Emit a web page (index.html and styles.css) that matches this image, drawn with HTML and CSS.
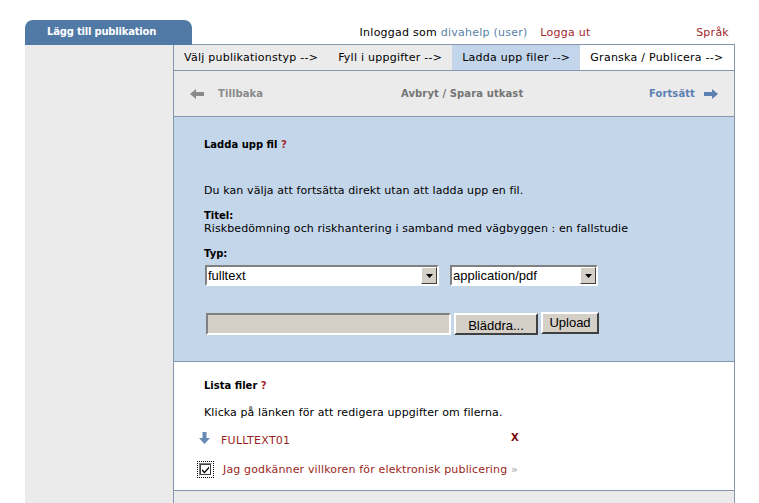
FILE: index.html
```html
<!DOCTYPE html>
<html lang="sv">
<head>
<meta charset="utf-8">
<title>Lägg till publikation</title>
<link rel="stylesheet" href="styles.css">
</head>
<body>
<div class="page">
  <div class="header">
    <div class="tab">Lägg till publikation</div>
    <div class="userbar">
      <div class="login">Inloggad som <span class="user">divahelp (user)</span> <span class="logout">Logga ut</span></div>
      <div class="lang">Språk</div>
    </div>
  </div>
  <div class="body">
    <div class="sidebar"></div>
    <div class="main">
      <div class="steps">
        <div class="step">Välj publikationstyp --&gt;</div>
        <div class="step">Fyll i uppgifter --&gt;</div>
        <div class="step active">Ladda upp filer --&gt;</div>
        <div class="step rest">Granska / Publicera --&gt;</div>
      </div>
      <div class="nav">
        <div class="back">
          <svg class="arrow" width="14" height="10" viewBox="0 0 14 10"><path d="M0 5 L6 0 L6 3 L14 3 L14 7 L6 7 L6 10 Z" fill="#8a8a8a"/></svg>
          <span>Tillbaka</span>
        </div>
        <div class="cancel">Avbryt / Spara utkast</div>
        <div class="next">
          <span>Fortsätt</span>
          <svg class="arrow" width="14" height="10" viewBox="0 0 14 10"><path d="M14 5 L8 0 L8 3 L0 3 L0 7 L8 7 L8 10 Z" fill="#5b80b2"/></svg>
        </div>
      </div>
      <div class="upload">
        <div class="heading">Ladda upp fil <span class="help">?</span></div>
        <p class="info">Du kan välja att fortsätta direkt utan att ladda upp en fil.</p>
        <div class="label">Titel:</div>
        <div class="title">Riskbedömning och riskhantering i samband med vägbyggen : en fallstudie</div>
        <div class="label typ">Typ:</div>
        <div class="selects">
          <div class="select wide"><span class="val">fulltext</span><span class="drop"><svg width="7" height="4" viewBox="0 0 7 4"><path d="M0 0 H7 L3.5 4 Z" fill="#000"/></svg></span></div>
          <div class="select narrow"><span class="val">application/pdf</span><span class="drop"><svg width="7" height="4" viewBox="0 0 7 4"><path d="M0 0 H7 L3.5 4 Z" fill="#000"/></svg></span></div>
        </div>
        <div class="filerow">
          <div class="filefield"></div>
          <div class="btn browse">Bläddra...</div>
          <div class="btn up">Upload</div>
        </div>
      </div>
      <div class="files">
        <div class="heading">Lista filer <span class="help">?</span></div>
        <p class="info">Klicka på länken för att redigera uppgifter om filerna.</p>
        <div class="filerowlist">
          <svg class="down" width="11" height="12" viewBox="0 0 11 12"><path d="M5.5 12 L0 6 L3.5 6 L3.5 0 L7.5 0 L7.5 6 L11 6 Z" fill="#6a8ab6"/></svg>
          <span class="fname">FULLTEXT01</span>
          <span class="del">X</span>
        </div>
        <div class="agree">
          <span class="focus"><span class="check"><svg width="9" height="9" viewBox="0 0 9 9"><path d="M1 4 L3.5 6.5 L8 1.5 L8 3.5 L3.5 8.5 L1 6 Z" fill="#000"/></svg></span></span>
          <span class="terms">Jag godkänner villkoren för elektronisk publicering <span class="raquo">»</span></span>
        </div>
      </div>
      <div class="foot"></div>
    </div>
  </div>
</div>
</body>
</html>
```
FILE: styles.css
```css
html, body {
  margin: 0;
  padding: 0;
  background: #fff;
}
body {
  font-family: "DejaVu Sans", Verdana, sans-serif;
  font-size: 11px;
  letter-spacing: 0.25px;
  color: #000;
  width: 759px;
  height: 503px;
  overflow: hidden;
}
.page {
  padding: 20px 0 0 25px;
  width: 710px;
}
.header {
  display: flex;
  height: 25px;
}
.tab {
  width: 167px;
  background: #5079a6;
  border-radius: 8px 8px 0 0;
  color: #fff;
  font-weight: bold;
  font-size: 10px;
  letter-spacing: -0.2px;
  padding-left: 22px;
  box-sizing: border-box;
  line-height: 23px;
}
.userbar {
  flex: 1;
  display: flex;
  border-bottom: 1px solid #8497ae;
  box-sizing: border-box;
  align-items: center;
}
.login {
  flex: 1;
  text-align: center;
  padding-left: 62px;
}
.user { color: #5a7fa8; }
.logout { color: #a3282a; margin-left: 9px; }
.lang {
  color: #a3282a;
  padding-right: 6px;
}
.body {
  display: flex;
  height: 458px;
}
.sidebar {
  width: 148px;
  background: #ebebeb;
}
.main {
  width: 562px;
  border-left: 1px solid #8497ae;
  border-right: 1px solid #8497ae;
  box-sizing: border-box;
  display: flex;
  flex-direction: column;
}
.steps {
  display: flex;
  height: 26px;
  border-bottom: 1px solid #8497ae;
  box-sizing: border-box;
  background: #ebebeb;
}
.step {
  padding: 0 10px;
  line-height: 25px;
  white-space: nowrap;
}
.step.active { background: #c3d5eb; }
.step.rest { background: #fff; flex: 1; }
.nav {
  height: 46px;
  border-bottom: 1px solid #8497ae;
  box-sizing: border-box;
  background: #ebebeb;
  display: flex;
  align-items: center;
  font-weight: bold;
  font-size: 10px;
  letter-spacing: 0.1px;
  padding: 0 16px 0 16px;
}
.back, .next {
  display: flex;
  align-items: center;
  gap: 14px;
}
.back { color: #8a8a8a; width: 200px; }
.cancel { flex: 1; color: #757575; padding-left: 11px; }
.next { color: #5b80b2; gap: 9px; }
.upload {
  height: 245px;
  background: #c4d6ea;
  border-bottom: 1px solid #8497ae;
  box-sizing: border-box;
  padding: 21px 0 0 30px;
}
.heading {
  font-weight: bold;
  font-size: 10px;
  letter-spacing: 0;
  line-height: 13px;
}
.help { color: #a3282a; }
.info {
  margin: 33px 0 0;
  line-height: 13px;
  letter-spacing: 0.1px;
}
.label {
  font-weight: bold;
  font-size: 10px;
  letter-spacing: 0;
  margin-top: 12px;
  line-height: 13px;
}
.title { line-height: 13px; letter-spacing: 0.1px; }
.label.typ { margin-top: 12px; }
.selects {
  display: flex;
  gap: 11px;
  margin-top: 5px;
}
.select {
  display: flex;
  height: 21px;
  box-sizing: border-box;
  border: 2px solid;
  border-color: #808080 #fff #fff #808080;
  background: #fff;
  font-family: "Liberation Sans", Arial, sans-serif;
  font-size: 13px;
  letter-spacing: 0;
  align-items: center;
}
.select.wide { width: 234px; margin-left: 1px; }
.select.narrow { width: 148px; }
.val { flex: 1; padding-left: 1px; }
.drop {
  width: 16px;
  height: 17px;
  box-sizing: border-box;
  background: #d4d0c8;
  border: 1px solid;
  border-color: #fff #404040 #404040 #fff;
  display: flex;
  align-items: center;
  justify-content: center;
}
.filerow {
  display: flex;
  margin-top: 26px;
  align-items: flex-start;
}
.filefield {
  width: 245px;
  height: 22px;
  box-sizing: border-box;
  background: #d4d0c8;
  border: 2px solid;
  border-color: #808080 #fff #fff #808080;
  margin: 1px 3px 0 2px;
}
.btn {
  height: 22px;
  box-sizing: border-box;
  background: #d4d0c8;
  border: 2px solid;
  border-color: #fff #404040 #404040 #fff;
  font-family: "Liberation Sans", Arial, sans-serif;
  font-size: 13px;
  letter-spacing: 0;
  line-height: 18px;
  text-align: center;
}
.btn.browse { width: 84px; padding-top: 2px; margin-top: 1px; }
.btn.up { width: 58px; margin-left: 3px; }
.files {
  height: 129px;
  background: #fff;
  border-bottom: 1px solid #8497ae;
  box-sizing: border-box;
  padding: 17px 0 0 30px;
}
.files .info { margin-top: 14px; }
.filerowlist {
  display: flex;
  align-items: flex-end;
  margin-top: 13px;
  margin-left: -5px;
  height: 14px;
}
.down { margin-bottom: 2px; }
.fname {
  color: #9b1f22;
  margin-left: 11px;
  width: 290px;
  line-height: 11px;
}
.del {
  color: #7a0c0c;
  font-weight: bold;
  font-size: 10px;
  position: relative;
  top: -3px;
}
.agree {
  display: flex;
  align-items: center;
  margin-top: 15px;
  margin-left: -7px;
}
.focus {
  width: 17px;
  height: 17px;
  box-sizing: border-box;
  border: 1px dotted #000;
  display: flex;
  align-items: center;
  justify-content: center;
}
.check {
  width: 13px;
  height: 13px;
  box-sizing: border-box;
  border: 2px solid;
  border-color: #808080 #fff #fff #808080;
  background: #fff;
  display: flex;
  align-items: center;
  justify-content: center;
  outline: 1px solid #404040;
  outline-offset: -2px;
}
.terms {
  color: #9b1f22;
  margin-left: 9px;
  letter-spacing: 0.15px;
}
.raquo { color: #a0a0a0; }
.foot {
  flex: 1;
  background: #ebebeb;
}
```
